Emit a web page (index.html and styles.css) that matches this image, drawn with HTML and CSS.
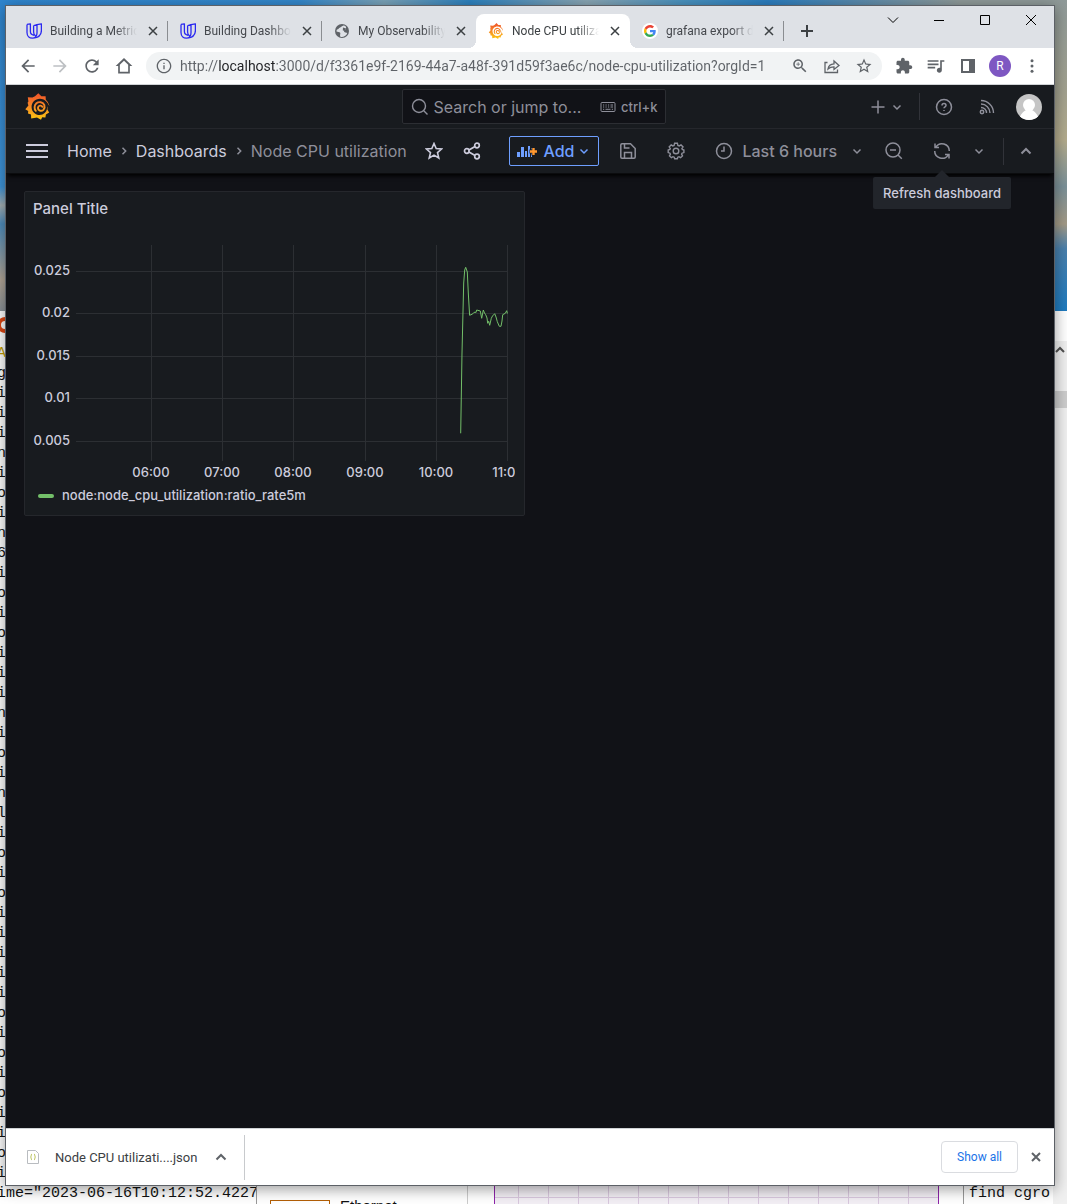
FILE: index.html
```html
<!DOCTYPE html>
<html lang="en">
<head>
<meta charset="utf-8">
<title>Node CPU utilization - Dashboards - Grafana</title>
<link rel="stylesheet" href="styles.css">
</head>
<body>
<svg class="sprite" aria-hidden="true">
  <defs>
    <linearGradient id="flame" gradientUnits="userSpaceOnUse" x1="0" y1="27" x2="0" y2="0">
      <stop offset="0" stop-color="#fcc80f"/><stop offset=".5" stop-color="#f68b25"/><stop offset="1" stop-color="#f0512a"/>
    </linearGradient>
    <symbol id="grafana" viewBox="0 0 25 27">
      <path fill="url(#flame)" d="M13.3 0.2L16.4 3.2L20.6 3.2L20.8 6.8Q23.6 9 24.4 12.8L22.6 12.6L22.4 16.5L24.2 19.4L20.9 21.4L20.4 24.6L17.2 24.2L16 26.8L12 24.6L6.2 25.6L6 21.6L3 20.6L3.2 18L0.3 16.2L3.4 12.4L2.6 9.8L3.4 8.6L2.8 4.2L7.4 4.6L10 3.2Z"/>
      <path fill="currentColor" d="M15 5.8C10 5.8 6.4 9.6 6.6 14.2C6.8 18.8 10.4 22 14.6 22C18.6 22 21.6 19 22 15.6C22 14.2 23.2 12.6 24.200 13.100C22.4 8.600 19 5.8 15 5.8Z"/>
      <path fill="none" stroke="url(#flame)" stroke-width="1.900" stroke-linecap="round" d="M17.400 13.800C16.600 12 13.200 12.200 13 14.600C12.800 17.600 16.400 18.800 18.400 16.800C20.800 14 19.400 9.800 15.800 9.200C12.200 8.600 9.800 11 9.600 14C9.500 15.400 10 17 10.800 17.800"/>
    </symbol>
    <symbol id="udacity" viewBox="0 0 16 16">
      <path fill="none" stroke="#2a28f0" stroke-width="1.3" stroke-linejoin="round" d="M1 1.4L4.4.8V8.6C4.4 10.6 6 12 8 12.4M1 1.4V9.6C1 13 3.4 15.2 6.4 15.2C9.2 15.2 11 13.2 11 9.8V1.6L15.4.8V7.4C15.4 11.6 12.6 14.6 7.4 15.2M7.8 2.6L11 1.6M7.6 2.6V9C7.6 10.8 8 12 9.6 12.8"/>
    </symbol>
    <symbol id="globe" viewBox="0 0 16 16">
      <circle cx="8" cy="8" r="7" fill="#5f6368"/>
      <path fill="#dee1e6" d="M9.6 2.4C7.6 2.8 7.4 4 6.2 4.4C4.4 5 4.8 6.2 3 6.4L2.3 8.2C3.6 9.4 5.6 8.6 6.2 9.8C6.8 11.2 5.4 12 6.4 13.8C8.6 14.6 12 13.2 13.2 10.6C12.6 9 11.4 10 10.4 9C9.2 7.8 10.6 7 12 6.8C11.4 5.6 12.4 5 12 3.8C11.2 3 10.6 2.4 9.6 2.4Z"/>
      <path fill="#5f6368" d="M9 4.5L12 5.5L11.4 8L8.8 7.6Z"/>
    </symbol>
    <symbol id="google" viewBox="0 0 48 48">
      <path fill="#ea4335" d="M24 9.5c3.54 0 6.71 1.22 9.21 3.6l6.85-6.85C35.9 2.38 30.47 0 24 0 14.62 0 6.51 5.38 2.56 13.22l7.98 6.19C12.43 13.72 17.74 9.5 24 9.5z"/>
      <path fill="#4285f4" d="M46.98 24.55c0-1.57-.15-3.09-.38-4.55H24v9.02h12.94c-.58 2.96-2.26 5.48-4.78 7.18l7.73 6c4.51-4.18 7.09-10.36 7.09-17.65z"/>
      <path fill="#fbbc05" d="M10.53 28.59c-.48-1.45-.76-2.99-.76-4.59s.27-3.14.76-4.59l-7.98-6.19C.92 16.46 0 20.12 0 24c0 3.88.92 7.54 2.56 10.78l7.97-6.19z"/>
      <path fill="#34a853" d="M24 48c6.48 0 11.93-2.13 15.89-5.81l-7.73-6c-2.15 1.45-4.92 2.3-8.16 2.3-6.26 0-11.57-4.22-13.47-9.91l-7.98 6.19C6.51 42.62 14.62 48 24 48z"/>
    </symbol>
    <symbol id="x" viewBox="0 0 16 16"><path d="M4 4L12 12M12 4L4 12"/></symbol>
    <symbol id="down" viewBox="0 0 16 16"><path d="M4.5 6.5L8 10L11.5 6.5"/></symbol>
    <symbol id="right" viewBox="0 0 16 16"><path d="M6.5 4.8L9.7 8L6.5 11.2"/></symbol>
    <symbol id="up" viewBox="0 0 16 16"><path d="M3.5 10.5L8 6L12.5 10.5"/></symbol>
  </defs>
</svg>

<div class="desktop">
  <div class="backdrop" aria-hidden="true">
    <div class="sky"></div>
    <div class="terminal">
      <span class="badge"></span>
<pre class="log"><span class="gold">A</span>
g
i
i
i
n
i
o
i
n
6
i
o
i
o
i
i
i
n
i
o
i
n
l
i
o
i
o
i
i
i
i
i
o
i
o
i
o
i
i
o
i</pre>
      <pre class="log">ime="2023-06-16T10:12:52.4227</pre>
    </div>
    <div class="scrollbar">
      <svg class="i" width="10" height="10" viewBox="0 0 10 10"><path d="M1 7L5 3L9 7" stroke-width="2"/></svg>
      <span class="thumb"></span>
    </div>
    <div class="strip">
      <div class="doc"><span class="box"></span><span class="word">Ethernet</span></div>
      <div class="margin"></div>
      <div class="sheet"></div>
      <div class="gap"></div>
      <div class="find">find cgro</div>
    </div>
  </div>

  <div class="window">
    <header class="tabstrip">
      <div class="tab"><svg class="fav"><use href="#udacity"/></svg><button class="name">Building a Metrics</button><button class="close" aria-label="Close tab"><svg class="i"><use href="#x"/></svg></button></div>
      <div class="tab"><svg class="fav"><use href="#udacity"/></svg><button class="name">Building Dashboards</button><button class="close" aria-label="Close tab"><svg class="i"><use href="#x"/></svg></button></div>
      <div class="tab plain"><svg class="fav"><use href="#globe"/></svg><button class="name">My Observability</button><button class="close" aria-label="Close tab"><svg class="i"><use href="#x"/></svg></button></div>
      <div class="tab active"><svg class="fav"><use href="#grafana"/></svg><button class="name">Node CPU utilization</button><button class="close" aria-label="Close tab"><svg class="i"><use href="#x"/></svg></button></div>
      <div class="tab"><span class="fav round"><svg><use href="#google"/></svg></span><button class="name">grafana export dash</button><button class="close" aria-label="Close tab"><svg class="i"><use href="#x"/></svg></button></div>
      <button class="newtab" aria-label="New tab"><svg class="i" width="14" height="14" viewBox="0 0 14 14"><path d="M7 1V13M1 7H13" stroke-width="2"/></svg></button>
      <div class="controls">
        <button aria-label="Search tabs"><svg class="i" width="12" height="12" viewBox="0 0 12 12"><path d="M1 3.5L6 8.5L11 3.5"/></svg></button>
        <button aria-label="Minimize"><svg class="i" width="12" height="12" viewBox="0 0 12 12"><path d="M1 6.5H11"/></svg></button>
        <button aria-label="Maximize"><svg class="i" width="12" height="12" viewBox="0 0 12 12"><path d="M1.500 1.500H10.500V10.500H1.500Z"/></svg></button>
        <button aria-label="Close"><svg class="i" width="12" height="12" viewBox="0 0 12 12"><path d="M1 1L11 11M11 1L1 11"/></svg></button>
      </div>
    </header>

    <div class="toolbar">
      <button aria-label="Back"><svg width="20" height="20" viewBox="0 0 24 24"><path d="M20 11H7.830l5.590-5.590L12 4l-8 8 8 8 1.410-1.410L7.830 13H20v-2z"/></svg></button>
      <button aria-label="Forward" disabled><svg width="20" height="20" viewBox="0 0 24 24"><path d="M12 4l-1.410 1.410L16.170 11H4v2h12.170l-5.580 5.590L12 20l8-8z"/></svg></button>
      <button aria-label="Reload"><svg width="20" height="20" viewBox="0 0 24 24"><path d="M17.650 6.350C16.200 4.900 14.210 4 12 4c-4.420 0-7.990 3.580-7.990 8s3.570 8 7.990 8c3.730 0 6.840-2.550 7.730-6h-2.080c-.82 2.330-3.040 4-5.650 4-3.310 0-6-2.690-6-6s2.690-6 6-6c1.660 0 3.140.69 4.220 1.780L13 11h7V4l-2.350 2.350z"/></svg></button>
      <button aria-label="Home"><svg width="20" height="20" viewBox="0 0 24 24"><path d="M12 2.500L2 12h3v9h14v-9h3L12 2.500zM17 19H7v-8.400l5-4.900 5 4.900V19z"/></svg></button>
      <div class="omnibox">
        <svg width="16" height="16" viewBox="0 0 24 24"><path d="M11 7h2v2h-2zM11 11h2v6h-2zM12 1C5.900 1 1 5.900 1 12s4.900 11 11 11 11-4.900 11-11S18.100 1 12 1zm0 20c-5 0-9-4-9-9s4-9 9-9 9 4 9 9-4 9-9 9z"/></svg>
        <input type="text" aria-label="Address" value="http://localhost:3000/d/f3361e9f-2169-44a7-a48f-391d59f3ae6c/node-cpu-utilization?orgId=1">
        <button aria-label="Zoom"><svg width="18" height="18" viewBox="0 0 24 24"><path d="M15.500 14h-.79l-.28-.27C15.410 12.590 16 11.110 16 9.500 16 5.910 13.090 3 9.500 3S3 5.910 3 9.500 5.910 16 9.500 16c1.610 0 3.090-.59 4.230-1.570l.27.28v.79l5 4.990L20.490 19l-4.990-5zm-6 0C7.010 14 5 11.990 5 9.500S7.010 5 9.500 5 14 7.010 14 9.500 11.990 14 9.500 14zM9 7h1v2h2v1h-2v2H9v-2H7V9h2z"/></svg></button>
        <button aria-label="Share"><svg class="i" width="18" height="18" viewBox="0 0 18 18"><path stroke-width="1.300" d="M4.500 5.500H2V15.500H14.500V12.500M5 12C5.500 8.600 7.600 7 11 6.800V4L16 8.500L11 12.500V9.800C8.400 9.800 6.600 10.400 5 12Z"/></svg></button>
        <button aria-label="Bookmark"><svg width="18" height="18" viewBox="0 0 24 24"><path d="M22 9.240l-7.190-.62L12 2 9.190 8.630 2 9.240l5.460 4.730L5.820 21 12 17.270 18.180 21l-1.630-7.030L22 9.240zM12 15.400l-3.760 2.270 1-4.280-3.320-2.880 4.380-.38L12 6.100l1.710 4.040 4.380.38-3.320 2.880 1 4.280L12 15.400z"/></svg></button>
      </div>
      <button aria-label="Extensions"><svg width="18" height="18" viewBox="0 0 24 24"><path d="M20.500 11H19V7c0-1.100-.9-2-2-2h-4V3.500C13 2.120 11.880 1 10.500 1S8 2.120 8 3.500V5H4c-1.100 0-1.990.9-1.990 2v3.800H3.500c1.490 0 2.700 1.210 2.700 2.700s-1.210 2.700-2.700 2.700H2V20c0 1.100.9 2 2 2h3.800v-1.500c0-1.490 1.210-2.700 2.700-2.700s2.700 1.210 2.700 2.700V22H17c1.100 0 2-.9 2-2v-4h1.500c1.380 0 2.500-1.120 2.500-2.500S21.880 11 20.500 11z"/></svg></button>
      <button aria-label="Media"><svg width="20" height="20" viewBox="0 0 24 24"><path d="M15 5H2v2h13V5zm0 4H2v2h13V9zM2 15h9v-2H2v2zM17 5v9.200c-.3-.1-.6-.2-1-.2-1.700 0-3 1.300-3 3s1.300 3 3 3 3-1.300 3-3V7h3V5h-5z"/></svg></button>
      <button aria-label="Side panel"><svg width="14" height="14" viewBox="0 0 14 14"><path fill-rule="evenodd" d="M0 0H14V14H0ZM2 2V12H8V2Z"/></svg></button>
      <button aria-label="Profile"><span class="profile">R</span></button>
      <button aria-label="Menu"><svg width="18" height="18" viewBox="0 0 24 24"><circle cx="12" cy="5" r="2"/><circle cx="12" cy="12" r="2"/><circle cx="12" cy="19" r="2"/></svg></button>
    </div>

    <div class="app">
      <div class="topnav">
        <a class="logo" href="#home" aria-label="Grafana"><svg width="25" height="27"><use href="#grafana"/></svg></a>
        <label class="search">
          <svg class="i" width="18" height="18" viewBox="0 0 18 18"><path stroke-width="1.400" d="M13 13L16.500 16.500M14.500 8A6.500 6.500 0 1 1 1.500 8A6.500 6.500 0 1 1 14.500 8Z"/></svg>
          <input type="text" aria-label="Search" placeholder="Search or jump to...">
          <svg class="i" width="16" height="12" viewBox="0 0 16 12"><path d="M2 1.500H14A1 1 0 0 1 15 2.500V9.500A1 1 0 0 1 14 10.500H2A1 1 0 0 1 1 9.500V2.500A1 1 0 0 1 2 1.500ZM3 4H4.200M5.500 4H6.700M8 4H9.200M10.500 4H13M3 6H4.200M5.500 6H6.700M8 6H9.200M10.500 6H13M3 8.300H4.200M5.500 8.300H10.500M11.800 8.300H13"/></svg>
          <kbd>ctrl+k</kbd>
        </label>
        <div class="actions">
          <button class="new" aria-label="New"><svg class="i" width="16" height="16" viewBox="0 0 16 16"><path stroke-width="1.500" d="M8 1.500V14.500M1.500 8H14.500"/></svg><svg class="i"><use href="#down"/></svg></button>
          <span class="rule"></span>
          <button class="help" aria-label="Help"><svg class="i" width="18" height="18" viewBox="0 0 18 18"><circle cx="9" cy="9" r="7.500"/><path stroke-width="1.500" d="M7 7.400C7 5 11 5 11 7.400C11 8.900 9 8.800 9 10.300M9 12V13"/></svg></button>
          <button class="news" aria-label="News"><svg class="i" width="16" height="16" viewBox="0 0 16 16"><circle cx="3" cy="13" r="1.700"/><path stroke-width="1.400" d="M2 8.500A5.500 5.500 0 0 1 7.500 14M2 5A9 9 0 0 1 11 14M2 1.500A12.500 12.500 0 0 1 14.500 14"/></svg></button>
          <button class="user" aria-label="Account"><svg width="26" height="26" viewBox="0 0 26 26"><path fill="#c5c5c5" d="M0 0H26V26H0Z"/><circle cx="13" cy="11" r="6" fill="#fff"/><path fill="#fff" d="M3 26C4 20 8 17 10 16H16C18 17 22 20 23 26Z"/></svg></button>
        </div>
      </div>

      <div class="subnav">
        <button class="burger" aria-label="Menu"><svg class="i" width="22" height="16" viewBox="0 0 22 16"><path stroke-width="2" d="M0 2H22M0 8H22M0 14H22"/></svg></button>
        <nav class="crumbs" aria-label="Breadcrumbs">
          <a href="#home">Home</a><svg class="i"><use href="#right"/></svg><a href="#dashboards">Dashboards</a><svg class="i"><use href="#right"/></svg><span>Node CPU utilization</span>
        </nav>
        <button class="star" aria-label="Mark as favorite"><svg class="i" width="18" height="18" viewBox="0 0 18 18"><path stroke-width="1.600" d="M9 1.500L11.200 6.500L16.600 7L12.500 10.600L13.800 16L9 13.100L4.200 16L5.500 10.600L1.400 7L6.800 6.500Z"/></svg></button>
        <button class="share" aria-label="Share dashboard"><svg class="i" width="18" height="18" viewBox="0 0 18 18"><path stroke-width="1.700" d="M6 8L12 4.500M6 10L12 13.500"/><g stroke-width="1.700"><circle cx="3.800" cy="9" r="2.300"/><circle cx="14" cy="3.500" r="2.300"/><circle cx="14" cy="14.500" r="2.300"/></g></svg></button>
        <div class="tools">
          <button class="add"><svg width="22" height="16" viewBox="0 0 22 16"><path fill="#6e9fff" d="M1 9H4V14H1ZM5 4H8V14H5ZM9 8H11V14H9ZM12 3H14V14H12ZM15 5H16V14H15Z"/><path d="M17.500 4.500V12.500M13.500 8.500H21.500" stroke="#181b1f" stroke-width="4"/><path d="M17.500 5V12M14 8.500H21" stroke="#ff9830" stroke-width="2.400"/></svg>Add<svg class="i"><use href="#down"/></svg></button>
          <button class="save" aria-label="Save dashboard"><svg class="i" width="18" height="18" viewBox="0 0 18 18"><path stroke-width="1.500" d="M3 1.800H11.500L16.200 6.500V15A1.200 1.200 0 0 1 15 16.200H3A1.200 1.200 0 0 1 1.800 15V3A1.200 1.200 0 0 1 3 1.800ZM5.500 16V10.500H12.500V16M5.500 2V6H10.500"/></svg></button>
          <button class="gear" aria-label="Dashboard settings"><svg class="i" width="18" height="18" viewBox="0 0 18 18"><circle cx="9" cy="9" r="2.800" stroke-width="1.400"/><path stroke-width="1.400" d="M7.600 1.300H10.400L10.900 3.400L12.200 3.900L14 2.800L16 4.900L14.900 6.600L15.300 7.500L16.900 8V10.600L15 11.200L14.600 12.200L15.500 13.900L13.600 15.700L12 14.700L10.800 15.200L10.300 16.800H7.700L7.200 15.200L6 14.700L4.400 15.700L2.500 13.900L3.400 12.200L3 11.200L1.200 10.600V8L2.900 7.500L3.300 6.600L2.200 4.900L4.200 2.800L5.800 3.900L7.100 3.400Z"/></svg></button>
          <button class="time"><svg class="i" width="18" height="18" viewBox="0 0 18 18"><circle cx="9" cy="9" r="7.500" stroke-width="1.500"/><path stroke-width="1.500" d="M9 4.500V9H6"/></svg><span>Last 6 hours</span><svg class="i"><use href="#down"/></svg></button>
          <button class="out" aria-label="Zoom out"><svg class="i" width="18" height="18" viewBox="0 0 18 18"><path stroke-width="1.500" d="M13 13L16.800 16.800M15 8A7 7 0 1 1 1 8A7 7 0 1 1 15 8ZM5 8H11"/></svg></button>
          <div class="refresh">
            <button aria-label="Refresh dashboard" aria-describedby="tip"><svg class="i" width="18" height="18" viewBox="0 0 18 18"><path stroke-width="1.500" d="M2 1.500V5.500H6M2.800 5.200A7.300 7.300 0 0 1 16.300 9M16 16.500V12.500H12M15.200 12.800A7.300 7.300 0 0 1 1.700 9"/></svg></button>
            <div class="tip" id="tip" role="tooltip">Refresh dashboard</div>
          </div>
          <button class="every" aria-label="Refresh interval"><svg class="i"><use href="#down"/></svg></button>
          <span class="rule"></span>
          <button class="fold" aria-label="Hide toolbar"><svg class="i"><use href="#up"/></svg></button>
        </div>
      </div>

      <main class="board">
        <section class="panel">
          <h2>Panel Title</h2>
          <svg class="chart" viewBox="0 0 490 257" role="img" aria-label="CPU utilization over the last six hours">
            <path class="grid" d="M51 46.500H483M51 88.500H483M51 131.500H483M51 173.500H483M51 216.500H483M126.500 20V236M197.500 20V236M268.500 20V236M340.500 20V236M411.500 20V236M482.500 20V236"/>
            <g class="axis" text-anchor="end">
              <text x="45" y="50">0.025</text><text x="45" y="92">0.02</text><text x="45" y="135">0.015</text><text x="45" y="177">0.01</text><text x="45" y="220">0.005</text>
            </g>
            <g class="axis" text-anchor="middle">
              <text x="126" y="252">06:00</text><text x="197" y="252">07:00</text><text x="268" y="252">08:00</text><text x="340" y="252">09:00</text><text x="411" y="252">10:00</text><text x="483" y="252">11:00</text>
            </g>
            <path class="line" d="M435.700 208.300L437 128L438.700 58L439.700 45L440.700 42.300L442.300 47L443.300 68L444.600 90.300L447 89.300L448.500 88L450 87L451 87.500L451.700 85L455.300 86L456.700 93.300L458.300 85L459.500 88L460.700 89.700L462 93L462.700 98.300L463.700 96.300L464.700 100.300L466.300 93.300L467.500 91L469.700 88.700L471 92L472.300 96.700L474.300 101.300H476L477 96L477.700 89.700L480.300 88.300L481.700 85.700L482.400 88.500"/>
          </svg>
          <div class="legend"><i></i>node:node_cpu_utilization:ratio_rate5m</div>
        </section>
      </main>
    </div>

    <footer class="shelf">
      <button class="file"><svg width="14" height="16" viewBox="0 0 14 16"><path fill="#fff" stroke="#b9bcc0" d="M1.500 1.500H9.500L12.500 4.500V14.500H1.500Z"/><path fill="none" stroke="#b3bd4a" d="M6 5C5 5 5.500 7.500 4.500 8C5.500 8.500 5 11 6 11M8 5C9 5 8.500 7.500 9.500 8C8.500 8.500 9 11 8 11"/></svg><span>Node CPU utilizati....json</span></button>
      <button class="more" aria-label="Download options"><svg class="i"><use href="#up"/></svg></button>
      <span class="divider"></span>
      <button class="showall">Show all</button>
      <button class="dismiss" aria-label="Close downloads"><svg class="i"><use href="#x"/></svg></button>
    </footer>
  </div>
</div>
</body>
</html>
```
FILE: styles.css
```css
* { box-sizing: border-box; }

body {
  margin: 0;
  font-family: Roboto, "Open Sans", sans-serif;
  font-size: 12px;
}

button, input { font: inherit; color: inherit; }

button {
  display: flex;
  align-items: center;
  justify-content: center;
  padding: 0;
  border: 0;
  background: none;
}

a { color: inherit; text-decoration: none; }
svg { display: block; flex: none; }

.sprite { position: absolute; width: 0; height: 0; }

.i {
  width: 16px;
  height: 16px;
  fill: none;
  stroke: currentColor;
  stroke-width: 1.5;
}
.i[width="10"] { width: 10px; height: 10px; }
.i[width="12"] { width: 12px; height: 12px; stroke-width: 1; }
.i[width="14"] { width: 14px; height: 14px; }
.i[width="18"] { width: 18px; height: 18px; }
.i[width="22"] { width: 22px; }
.i[height="12"] { height: 12px; stroke-width: 1; }

/* Desktop behind the browser window */
.desktop {
  position: relative;
  display: flex;
  min-height: 100vh;
  padding: 5px 12px 18px 5px;
  overflow: hidden;
}

.backdrop {
  position: absolute;
  inset: 0;
  display: flex;
  flex-direction: column;
  background: #fff;
  font: 15px/20px "Liberation Mono", monospace;
  color: #111;
}

.sky {
  height: 311px;
  background:
    linear-gradient(#8f9a99, #a3a28f 30%, #b3ab8c 45%, #7b9199 60%, #a39a86 72%, #4a80ac 80%, #1e7bc0) right / 13px 100% no-repeat,
    linear-gradient(#2f86d0, #3f94d8 60%, #a5b0b4 66%, #4f8dbd 72%, #b3a697 90%, #8b9298) left / 5px 100% no-repeat,
    linear-gradient(90deg, #2f86d0, #3488cc 28%, #7ba3b8 36%, #2d82c0 44%, #8aa6b4 55%, #4b93c0 64%, #2c7ec0 72%, #8f9a99 90%);
}

.terminal { position: relative; flex: 1; padding-top: 33px; }
.log { margin: 0 0 0 -3px; font: inherit; }
.gold { color: #c19c00; }

.badge {
  position: absolute;
  top: 6px;
  left: -3px;
  width: 16px;
  height: 16px;
  border: 4px solid #dd4814;
  border-radius: 8px;
}

.scrollbar {
  position: absolute;
  top: 341px;
  right: 0;
  bottom: 0;
  width: 14px;
  padding: 4px 2px;
  background: #f0f0f0;
  color: #505050;
}
.thumb { display: block; height: 17px; margin: 36px -2px 0; background: #cdcdcd; }

.strip {
  position: absolute;
  left: 256px;
  right: 14px;
  bottom: 0;
  display: flex;
  height: 22px;
  overflow: hidden;
  background: #fff;
}
.doc {
  display: flex;
  gap: 10px;
  width: 212px;
  padding: 18px 0 0 13px;
  border-left: 1px solid #999;
  border-right: 1px solid #ccc;
}
.box { width: 60px; height: 20px; border: 1px solid #b45f06; }
.word { margin-top: -4px; font-family: "Liberation Sans", sans-serif; }
.margin { width: 26px; }
.sheet {
  flex: 1;
  border: solid #8e24aa;
  border-width: 0 1px;
  background:
    linear-gradient(#d9c8de, #d9c8de) 0 15px / 100% 1px no-repeat,
    repeating-linear-gradient(90deg, #f3eff5 0 23px, #d9c8de 23px 24px, #f3eff5 24px 30px);
}
.gap { width: 25px; border-right: 1px solid #999; }
.find { width: 89px; padding-left: 5px; line-height: 24px; white-space: nowrap; }

/* Browser window */
.window {
  position: relative;
  display: flex;
  flex: 1;
  flex-direction: column;
  min-width: 0;
  border: 1px solid #5c6066;
  background: #fff;
  box-shadow: 0 3px 14px rgba(0, 0, 0, .4);
}

.tabstrip {
  display: flex;
  align-items: flex-end;
  height: 42px;
  padding-left: 8px;
  background: #dee1e6;
  color: #45484d;
}

.tab {
  position: relative;
  display: flex;
  flex: 0 1 154px;
  align-items: center;
  gap: 8px;
  height: 34px;
  min-width: 0;
  padding: 0 7px 0 12px;
}
.tab::after {
  content: "";
  position: absolute;
  right: 0;
  width: 1px;
  height: 20px;
  background: #8a8d91;
}
.tab.plain::after, .tab.active::after { display: none; }
.tab.active {
  border-radius: 8px 8px 0 0;
  background: #fff;
  color: #3c4043;
}
.tab.active::before {
  content: "";
  position: absolute;
  left: -8px;
  right: -8px;
  bottom: 0;
  height: 8px;
  background:
    radial-gradient(circle at 0 0, transparent 8px, #fff 8px) left / 8px 8px no-repeat,
    radial-gradient(circle at 100% 0, transparent 8px, #fff 8px) right / 8px 8px no-repeat;
}

.fav { flex: none; width: 16px; height: 16px; color: #fff; }
.round { display: grid; place-items: center; border-radius: 8px; background: #fff; }
.round svg { width: 12px; height: 12px; }

.name {
  display: block;
  flex: 1;
  min-width: 0;
  overflow: hidden;
  text-align: left;
  white-space: nowrap;
  mask-image: linear-gradient(90deg, #000 75%, transparent);
}
.close { width: 16px; height: 16px; color: #3c4043; }

.newtab { width: 28px; height: 34px; margin-left: 9px; color: #3c4043; }

.controls { display: flex; align-self: flex-start; margin-left: auto; color: #000; }
.controls button { width: 46px; height: 28px; }

.toolbar {
  display: flex;
  align-items: center;
  height: 37px;
  padding: 0 6px;
  border-bottom: 1px solid #d0d3d6;
  color: #5f6368;
}
.toolbar button { flex: none; width: 32px; height: 28px; }
.toolbar button:disabled { color: #bdc0c3; }
.toolbar svg:not(.i) { fill: currentColor; }

.omnibox {
  display: flex;
  flex: 1;
  align-items: center;
  gap: 8px;
  height: 28px;
  min-width: 0;
  margin: 0 6px;
  padding: 0 2px 0 10px;
  border-radius: 14px;
  background: #f1f3f4;
}
.omnibox input {
  flex: 1;
  min-width: 0;
  height: 28px;
  padding: 0;
  border: 0;
  background: linear-gradient(90deg, #5f6368 39px, #202124 39px 95px, #5f6368 95px);
  background-clip: text;
  font-size: 14px;
  -webkit-text-fill-color: transparent;
}
.omnibox button { margin-left: -8px; }
.omnibox input + button { margin-left: 0; }

.profile {
  width: 22px;
  height: 22px;
  border-radius: 11px;
  background: #7e57c2;
  color: #fff;
  line-height: 22px;
}

/* Grafana */
.app {
  display: flex;
  flex: 1;
  flex-direction: column;
  overflow: hidden;
  background: #111217;
  color: #ccccdc;
  font-family: Inter, sans-serif;
  font-size: 16px;
}

.topnav {
  display: grid;
  grid-template-columns: 1fr 264px 1fr;
  align-items: center;
  height: 44px;
  padding: 0 12px 0 19px;
  border-bottom: 1px solid #25272c;
  background: #181b1f;
  color: #8e8f9a;
}
.logo { width: 25px; color: #181b1f; }

.search {
  display: flex;
  align-items: center;
  gap: 5px;
  height: 35px;
  padding: 0 7px 0 8px;
  border: 1px solid #2c2e33;
  border-radius: 2px;
  background: #111217;
}
.search input { flex: 1; min-width: 0; padding: 0; border: 0; background: none; }
.search input::placeholder { color: inherit; opacity: 1; }
.search kbd { font-family: inherit; font-size: 13px; font-weight: 500; }

.actions { display: flex; align-items: center; justify-content: flex-end; }
.new { gap: 3px; margin-right: 14px; }
.rule { width: 1px; height: 27px; background: #313339; }
.help { margin: 0 26px 0 15px; }
.news { margin-right: 21px; }
.user { overflow: hidden; border-radius: 13px; }

.subnav {
  position: relative;
  display: flex;
  align-items: center;
  height: 45px;
  padding: 0 12px 0 20px;
  border-bottom: 1px solid #0b0c0e;
  background: #181b1f;
  box-shadow: 0 4px 4px -2px #000;
}
.crumbs { display: flex; align-items: center; gap: 4px; margin-left: 19px; white-space: nowrap; }
.crumbs svg, .crumbs span { color: #8e8f9a; }
.star { margin-left: 18px; }
.share { margin-left: 20px; }

.tools { display: flex; align-items: center; margin-left: auto; color: #8e8f9a; font-weight: 500; }
.add {
  gap: 5px;
  height: 30px;
  padding: 0 6px;
  border: 1px solid #6e9fff;
  border-radius: 2px;
  color: #6e9fff;
}
.add .i { margin-left: -3px; }
.save { margin-left: 20px; }
.gear { margin-left: 30px; }
.time { gap: 9px; margin-left: 30px; }
.time .i:last-child { margin-left: 3px; }
.out { margin-left: 20px; }
.refresh { position: relative; margin-left: 30px; }
.every { margin: 0 16px 0 20px; }
.fold { width: 32px; margin-left: 6px; }

.tip {
  position: absolute;
  top: 35px;
  left: 50%;
  padding: 6px 10px;
  border-radius: 2px;
  background: #22252b;
  color: #ccccdc;
  font-size: 13px;
  line-height: 20px;
  white-space: nowrap;
  transform: translateX(-50%);
}
.tip::before {
  content: "";
  position: absolute;
  top: -7px;
  left: 50%;
  margin-left: -8px;
  border: solid transparent;
  border-width: 0 8px 8px;
  border-bottom-color: #22252b;
}

.board {
  display: grid;
  grid-template-columns: 1fr 1fr;
  align-items: start;
  gap: 10px;
  padding: 17px 18px;
}
.panel { border: 1px solid #25272c; border-radius: 2px; background: #181b1f; }
.panel h2 {
  height: 33px;
  margin: 0;
  padding-left: 8px;
  font-size: 15px;
  font-weight: 500;
  line-height: 33px;
}
.chart { width: calc(100% - 9px); overflow: hidden; }
.grid { fill: none; stroke: #2c2f33; }
.axis { fill: #ccccdc; font-size: 13px; font-weight: 500; }
.line { fill: none; stroke: #73bf69; stroke-linejoin: round; }
.legend {
  display: flex;
  align-items: center;
  gap: 8px;
  padding: 4px 13px 10px;
  font-size: 13px;
  font-weight: 500;
  line-height: 19px;
}
.legend i { width: 16px; height: 4px; border-radius: 2px; background: #73bf69; }

.shelf {
  display: flex;
  align-items: center;
  height: 57px;
  padding: 0 10px 0 20px;
  border-top: 1px solid #d0d3d6;
  color: #3c4043;
}
.file { gap: 15px; font-size: 13px; }
.more { margin: 0 15px 0 16px; color: #5f6368; }
.more .i, .dismiss .i, .fold .i { stroke-width: 2; }
.divider { width: 1px; height: 45px; background: #c8cacd; }
.showall {
  height: 32px;
  margin-left: auto;
  padding: 0 15px;
  border: 1px solid #dadce0;
  border-radius: 4px;
  color: #1a73e8;
}
.dismiss { margin-left: 10px; color: #5f6368; }
```
